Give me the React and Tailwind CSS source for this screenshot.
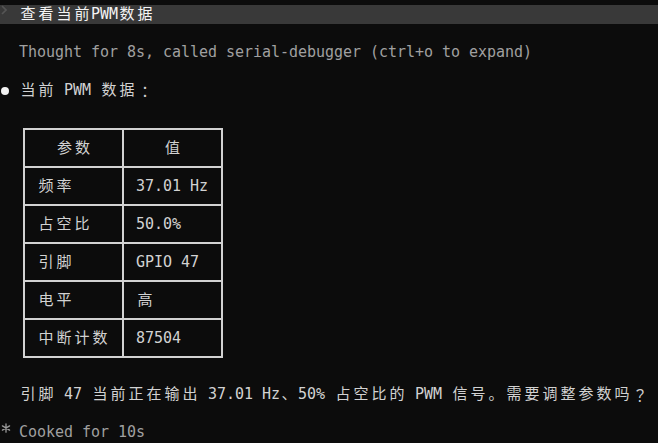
import React from 'react';

const isWide = (c) => /[\u2e80-\u9fff\u3000-\u303f\uff00-\uffef]/.test(c);
const isCentered = (c) => c === '：' || c === '？';

const Mono = ({ text }) =>
    text.split('').map((c, i) => (
        <span
            key={i}
            className={isWide(c) ? 'inline-block w-[18px] text-center' : 'inline-block w-[9px] text-center'}
            style={isCentered(c) ? { fontFamily: '"Noto Sans CJK JP", sans-serif' } : undefined}
        >
            {c === ' ' ? '\u00a0' : c}
        </span>
    ));

const Line = ({ children, className = '' }) => (
    <div className={`h-[19px] leading-[19px] flex items-center whitespace-pre ${className}`}>{children}</div>
);

const rows = [
    ['频率', '37.01 Hz'],
    ['占空比', '50.0%'],
    ['引脚', 'GPIO 47'],
    ['电平', '高'],
    ['中断计数', '87504'],
];

export default function App() {
    return (
        <div
            className="w-[658px] h-[443px] overflow-hidden bg-[#0c0c0c] text-[#d2d2d2] text-[15px] pt-[5px] pl-[1px]"
            style={{ fontFamily: '"DejaVu Sans Mono", "Noto Sans CJK SC", monospace' }}
        >
            <Line className="bg-[#393939] -ml-[1px] pl-[1px] text-[#f4f4f4]">
                <span className="inline-block w-[9px] h-[19px] flex items-center justify-center">
                    <svg width="6" height="10" viewBox="0 0 6 10" fill="none">
                        <path d="M1 1l4 4-4 4" stroke="#555555" strokeWidth="1.6" />
                    </svg>
                </span>
                <Mono text=" 查看当前PWM数据" />
            </Line>
            <Line />
            <Line className="text-[#a0a0a0]">
                <Mono text="  Thought for 8s, called serial-debugger (ctrl+o to expand)" />
            </Line>
            <Line />
            <Line>
                <span className="inline-block w-[9px] flex items-center justify-center">
                    <span className="inline-block w-[8px] h-[8px] rounded-full bg-[#f2f2f2]" />
                </span>
                <Mono text=" 当前 PWM 数据：" />
            </Line>
            <Line />

            <div className="mt-[9px] mb-[8px] ml-[22px] w-[200px] grid grid-cols-[97px_97px] gap-[2px] p-[2px] bg-[#d2d2d2]">
                <div className="h-[36px] bg-[#0c0c0c] flex items-center justify-center">
                    <Mono text="参数" />
                </div>
                <div className="h-[36px] bg-[#0c0c0c] flex items-center justify-center">
                    <Mono text="值" />
                </div>
                {rows.map(([k, v]) => (
                    <React.Fragment key={k}>
                        <div className="h-[36px] bg-[#0c0c0c] flex items-center pl-[12px]">
                            <Mono text={k} />
                        </div>
                        <div className="h-[36px] bg-[#0c0c0c] flex items-center pl-[12px]">
                            <Mono text={v} />
                        </div>
                    </React.Fragment>
                ))}
            </div>

            <Line />
            <Line>
                <Mono text="  引脚 47 当前正在输出 37.01 Hz、50% 占空比的 PWM 信号。需要调整参数吗？" />
            </Line>
            <Line />
            <Line className="text-[#a0a0a0]">
                <span className="inline-block w-[9px] h-[19px] flex items-center justify-center">
                    {/* teardrop asterisk */}
                    <svg width="10" height="10" viewBox="0 0 10 10" stroke="#9a9a9a" strokeWidth="1.3" strokeLinecap="round">
                        <path d="M5 0.8v8.4M1.4 2.9l7.2 4.2M1.4 7.1l7.2-4.2" />
                    </svg>
                </span>
                <Mono text=" Cooked for 10s" />
            </Line>
        </div>
    );
}
